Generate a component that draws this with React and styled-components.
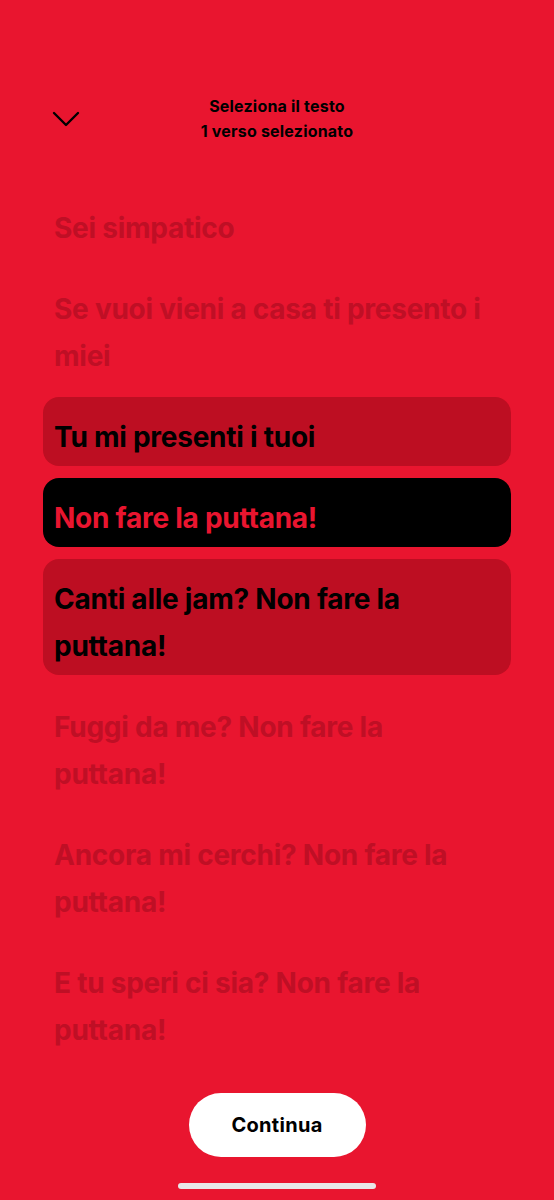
import React from "react";
import styled, { createGlobalStyle } from "styled-components";

const GlobalStyle = createGlobalStyle`
  html, body {
    margin: 0;
    padding: 0;
    background: #e9152f;
  }
  body {
    font-family: Inter, "Noto Sans", "Liberation Sans", sans-serif;
  }
`;

const Screen = styled.div`
  width: 554px;
  height: 1200px;
  background: #e9152f;
  display: flex;
  flex-direction: column;
  overflow: hidden;
`;

const Header = styled.header`
  display: grid;
  grid-template-columns: 96px 1fr 96px;
  align-items: center;
  padding: 93px 0 0;
  height: 52px;
`;

const BackButton = styled.button`
  border: 0;
  background: none;
  padding: 0 0 0 52px;
  display: flex;
  align-items: center;
  height: 30px;
  cursor: pointer;
`;

const Titles = styled.div`
  text-align: center;
  color: #000;
  font-weight: 700;
  font-size: 16px;
  line-height: 25px;
  letter-spacing: 0.2px;
`;

const Lyrics = styled.ol`
  list-style: none;
  margin: 43px 43px 0;
  padding: 0;
  display: flex;
  flex-direction: column;
  gap: 12px;
`;

const Line = styled.li`
  padding: 17px 22px 5px 11px;
  border-radius: 16px;
  font-size: 28px;
  line-height: 47px;
  font-weight: 700;
  letter-spacing: -0.25px;
  color: ${({ $state }) =>
    $state === "active" ? "#e9152f" : $state === "near" ? "#000" : "#bf0f25"};
  background: ${({ $state }) =>
    $state === "active" ? "#000" : $state === "near" ? "#bd0e22" : "transparent"};
`;

const Footer = styled.div`
  margin-top: auto;
  display: flex;
  flex-direction: column;
  align-items: center;
  padding-bottom: 11px;
`;

const ContinueButton = styled.button`
  width: 177px;
  height: 64px;
  border-radius: 32px;
  border: 0;
  background: #fff;
  color: #000;
  font-family: inherit;
  font-weight: 700;
  font-size: 20px;
  letter-spacing: 0.3px;
  cursor: pointer;
`;

const HomeIndicator = styled.div`
  margin-top: 26px;
  width: 198px;
  height: 6px;
  border-radius: 3px;
  background: #e8e8e8;
`;

const lines = [
  { text: "Sei simpatico" },
  { text: "Se vuoi vieni a casa ti presento i miei" },
  { text: "Tu mi presenti i tuoi", state: "near" },
  { text: "Non fare la puttana!", state: "active" },
  { text: "Canti alle jam? Non fare la puttana!", state: "near" },
  { text: "Fuggi da me? Non fare la puttana!" },
  { text: "Ancora mi cerchi? Non fare la puttana!" },
  { text: "E tu speri ci sia? Non fare la puttana!" },
];

export default function App() {
  return (
    <Screen>
      <GlobalStyle />
      <Header>
        <BackButton aria-label="Chiudi">
          <svg width="28" height="16" viewBox="0 0 28 16" fill="none">
            <path d="M2 2l12 12L26 2" stroke="#000" strokeWidth="2.4" strokeLinecap="round" strokeLinejoin="round" />
          </svg>
        </BackButton>
        <Titles>
          <div>Seleziona il testo</div>
          <div>1 verso selezionato</div>
        </Titles>
        <div />
      </Header>
      <Lyrics>
        {lines.map((l) => (
          <Line key={l.text} $state={l.state}>
            {l.text}
          </Line>
        ))}
      </Lyrics>
      <Footer>
        <ContinueButton>Continua</ContinueButton>
        <HomeIndicator />
      </Footer>
    </Screen>
  );
}
